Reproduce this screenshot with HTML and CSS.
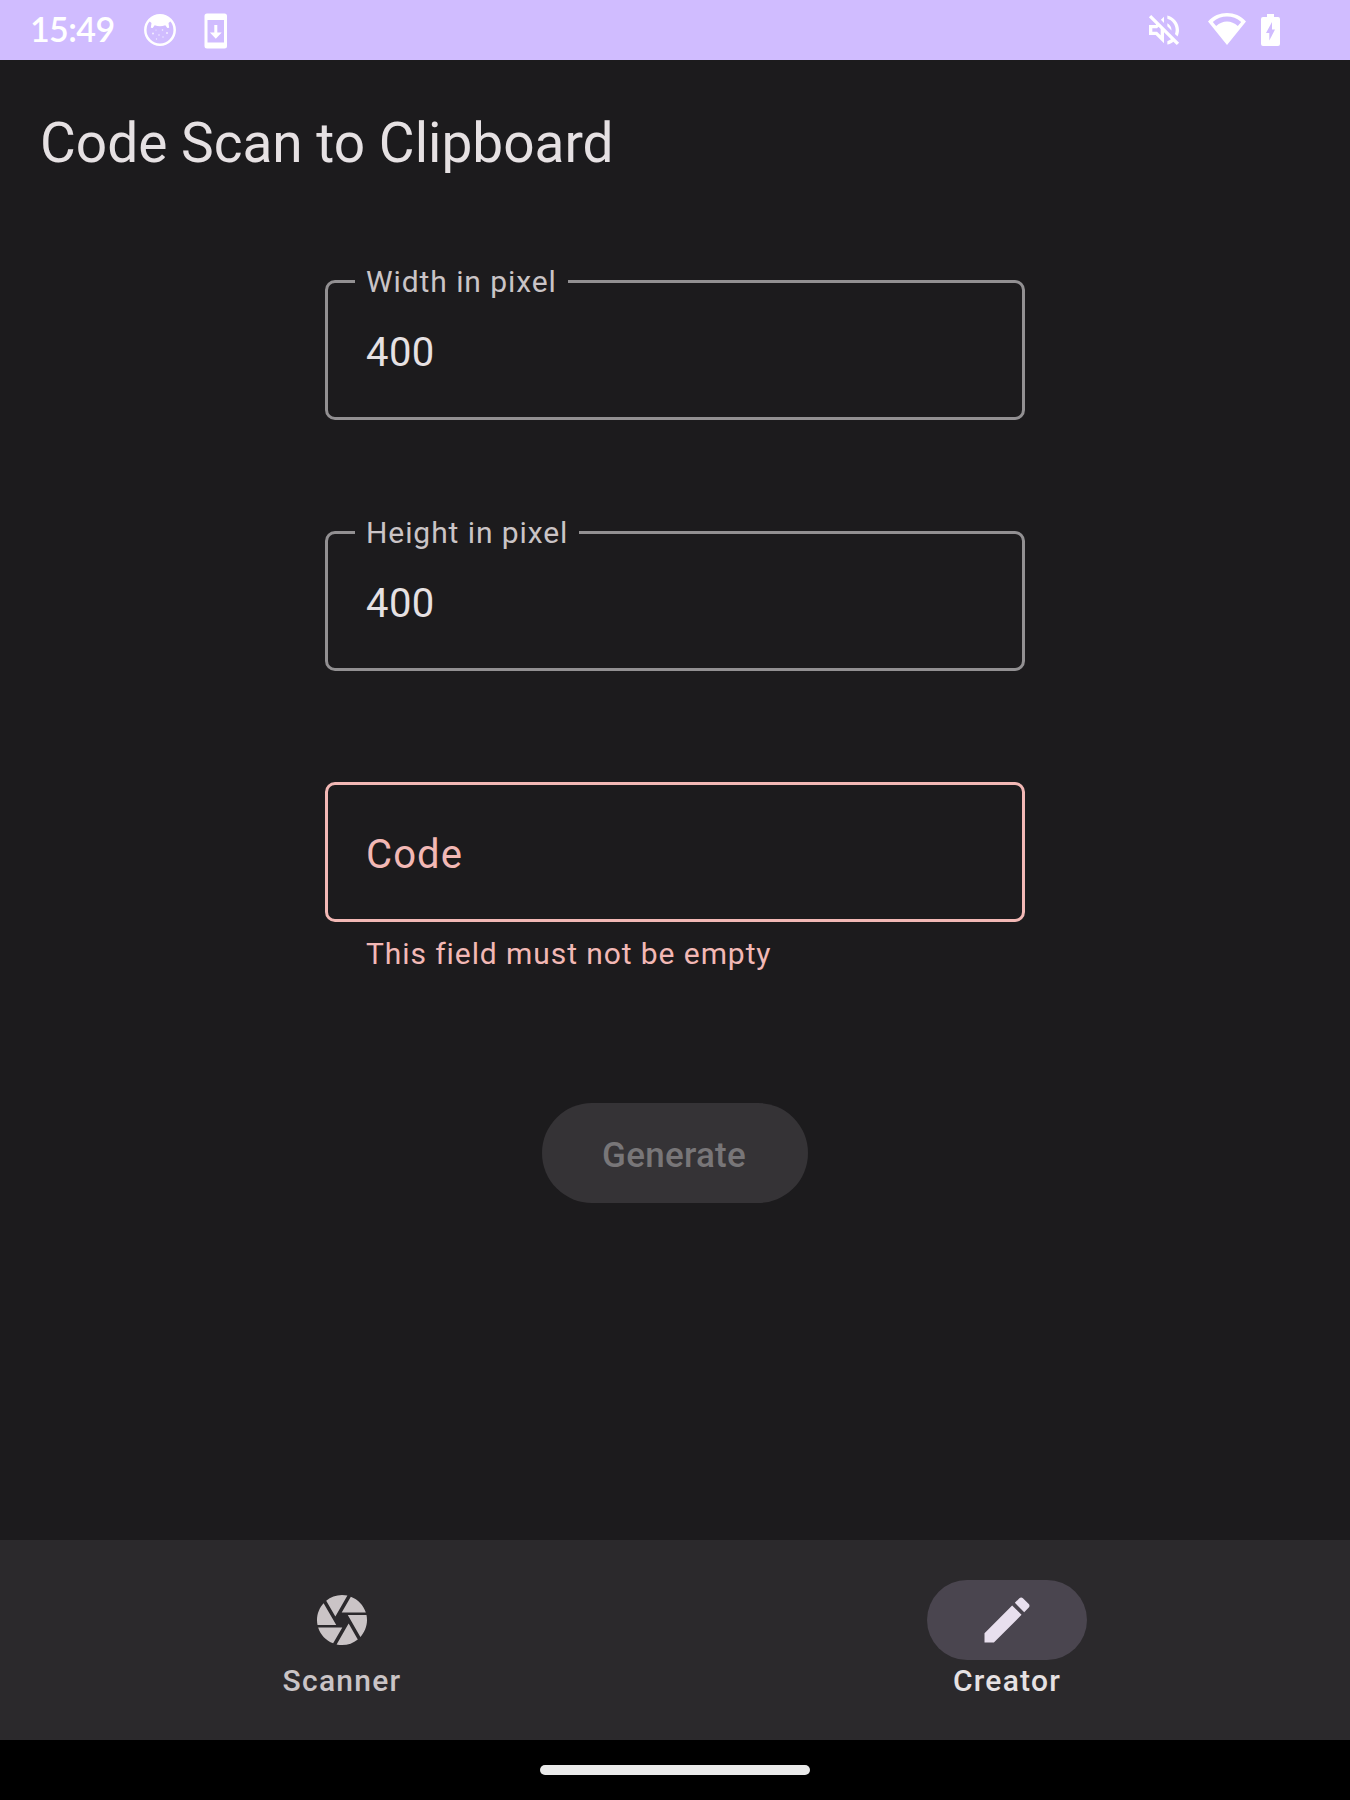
FILE: index.html
```html
<!DOCTYPE html>
<html lang="en">
<head>
<meta charset="utf-8">
<title>Code Scan to Clipboard</title>
<link rel="stylesheet" href="styles.css">
</head>
<body>
<div class="status-bar">
  <div class="status-left">
    <span class="clock">15:49</span>
    <svg class="icon-cat" viewBox="0 0 34 34">
      <circle cx="17" cy="17" r="14.7" fill="none" stroke="#fff" stroke-width="2.500"/>
      <path d="M5 7Q17-2 29 7L25.500 10 26.200 14.800 24.300 15 22.300 12.300Q17 14 11.700 12.300L9.700 15 7.800 14.800 8.500 10Z" fill="#fff"/>
      <g fill="#fff" opacity=".75"><circle cx="10" cy="20.500" r="1"/><circle cx="13" cy="17" r=".6"/><circle cx="19.500" cy="17" r=".8"/><circle cx="24" cy="20" r="1"/><circle cx="16" cy="22" r=".8"/><circle cx="20" cy="24" r=".7"/><circle cx="13.500" cy="26" r=".7"/></g>
    </svg>
    <svg class="icon-phone" viewBox="0 0 24 36">
      <path fill="#fff" fill-rule="evenodd" d="M3 .5h17.500a2.500 2.500 0 0 1 2.500 2.500v30a2.500 2.500 0 0 1-2.500 2.500H3A2.500 2.500 0 0 1 .5 33V3A2.500 2.500 0 0 1 3 .5ZM3.500 7v22.500h16.500V7Z"/>
      <path fill="#fff" d="M10.300 12h3v7.500h4.400l-5.900 6.300-5.900-6.300h4.400Z"/>
    </svg>
  </div>
  <div class="status-right">
    <svg class="icon-mute" viewBox="0 0 24 24"><path fill="#fff" d="M4.340 2.930L2.930 4.340 7.290 8.700 7 9H3v6h4l5 5v-6.590l4.180 4.180c-.65.49-1.380.88-2.180 1.110v2.060c1.340-.3 2.570-.92 3.610-1.750l2.050 2.050 1.410-1.410L4.340 2.930zM10 15.170L7.830 13H5v-2h2.830l.88-.88L10 11.410v3.760zM19 12c0 .82-.15 1.610-.41 2.340l1.530 1.530c.56-1.170.88-2.480.88-3.870 0-4.280-2.990-7.860-7-8.770v2.060c2.890.86 5 3.540 5 6.710zm-7-8l-1.880 1.880L12 7.760zm4.500 8c0-1.770-1.020-3.290-2.500-4.030v1.790l2.480 2.480c.01-.08.02-.16.02-.24z"/></svg>
    <svg class="icon-wifi" viewBox="0 0 38 32"><path fill="#fff" fill-rule="evenodd" d="M0 8.500C10-2.800 28-2.800 38 8.500L19 32ZM4.800 9L8.200 13C14.500 7 23.500 7 29.800 13L33.200 9C25 1.700 13 1.700 4.800 9Z"/></svg>
    <svg class="icon-battery" viewBox="0 0 19 32"><path fill="#fff" fill-rule="evenodd" d="M6 0h7v3h4a2 2 0 0 1 2 2v25a2 2 0 0 1-2 2H2a2 2 0 0 1-2-2V5a2 2 0 0 1 2-2h4ZM11 8L5 19h3.300v7.500L14 15.500h-3Z"/></svg>
  </div>
</div>

<header class="app-bar"><h1>Code Scan to Clipboard</h1></header>

<main class="content">
  <fieldset class="field">
    <legend>Width in pixel</legend>
    <span class="value">400</span>
  </fieldset>
  <fieldset class="field">
    <legend>Height in pixel</legend>
    <span class="value">400</span>
  </fieldset>
  <div class="field-group">
    <div class="field field-error"><span class="placeholder">Code</span></div>
    <p class="helper">This field must not be empty</p>
  </div>
  <button class="generate" disabled>Generate</button>
</main>

<nav class="bottom-nav">
  <a class="nav-item">
    <span class="indicator"><svg viewBox="0 0 24 24"><path fill="currentColor" d="M9.400 10.500l4.770-8.260C13.470 2.090 12.750 2 12 2c-2.400 0-4.600.85-6.320 2.250l3.660 6.350.06-.1zM21.540 9c-.92-2.920-3.150-5.260-6-6.340L11.880 9h9.660zm.26 1h-7.490l.29.5 4.760 8.250C20.970 16.970 22 14.610 22 12c0-.69-.07-1.350-.2-2zM8.540 12l-3.900-6.750C3.010 7.030 2 9.390 2 12c0 .69.07 1.350.2 2h7.490l-1.150-2zm-6.080 3c.92 2.920 3.150 5.260 6 6.340L12.120 15H2.460zm11.270 0l-3.900 6.760c.7.15 1.420.24 2.170.24 2.400 0 4.600-.85 6.320-2.250l-3.660-6.350-.93 1.600z"/></svg></span>
    <span class="nav-label">Scanner</span>
  </a>
  <a class="nav-item active">
    <span class="indicator"><svg viewBox="0 0 24 24"><path fill="currentColor" d="M3 17.250V21h3.750L17.810 9.940l-3.750-3.750L3 17.250zM20.710 7.040c.39-.39.39-1.020 0-1.410l-2.340-2.340c-.39-.39-1.020-.39-1.410 0l-1.830 1.830 3.750 3.750 1.830-1.830z"/></svg></span>
    <span class="nav-label">Creator</span>
  </a>
</nav>
<div class="gesture-bar"><span class="handle"></span></div>
</body>
</html>
```
FILE: styles.css
```css
* { box-sizing: border-box; }
body {
  margin: 0;
  width: 1350px;
  height: 1800px;
  display: flex;
  flex-direction: column;
  background: #1c1b1d;
  color: #e6e1e3;
  font-family: Roboto, "Liberation Sans", sans-serif;
}
svg { display: block; }

.status-bar {
  height: 60px;
  flex: none;
  display: flex;
  justify-content: space-between;
  padding: 0 70px 0 30px;
  background: #d0bcff;
  color: #fff;
}
.status-left, .status-right { display: flex; align-items: center; }
.clock {
  width: 113px;
  font: 600 34px/58px Lato, sans-serif;
  height: 60px;
  letter-spacing: -0.6px;
}
.icon-cat { width: 34px; height: 34px; }
.icon-phone { width: 24px; height: 36px; margin: 1px 0 0 26.5px; }
.icon-mute { width: 40px; height: 40px; margin-right: 1px; }
.icon-wifi { width: 38px; height: 32px; margin: -2px 0 0 23.500px; }
.icon-battery { width: 19px; height: 32px; margin: -1px 0 0 15px; }

.app-bar { height: 160px; flex: none; padding: 0 40px; }
h1 {
  margin: 0;
  font-size: 55px;
  font-weight: 400;
  line-height: 166px;
}

.content {
  flex: 1;
  display: flex;
  flex-direction: column;
  align-items: center;
  padding-top: 60px;
}
.field {
  width: 700px;
  height: 140px;
  margin: 0 0 111px;
  padding: 0 38px;
  border: 3px solid #929092;
  border-radius: 10px;
}
fieldset.field { padding-left: 27px; }
legend {
  padding: 0 11px;
  height: 3px;
  line-height: 3px;
  font-size: 30px;
  letter-spacing: 0.920px;
  color: #cac4c6;
}
.value {
  display: block;
  padding-left: 11px;
  font-size: 40px;
  line-height: 139px;
  letter-spacing: 0.4px;
}
.field-error { margin: 0; border-color: #f2b8b5; color: #f2b8b5; }
.placeholder { display: block; font-size: 40px; line-height: 139px; letter-spacing: 1.1px; }
.field-group { height: 321px; }
.helper {
  margin: 14px 0 0 41px;
  font-size: 30px;
  line-height: 36px;
  letter-spacing: 0.920px;
  color: #f2b8b5;
}
.generate {
  width: 266px;
  height: 100px;
  padding: 6px 2px 0 0;
  border: 0;
  border-radius: 50px;
  background: #353336;
  color: #787678;
  font: 500 35px/40px Roboto, sans-serif;
  letter-spacing: 0.25px;
}

.bottom-nav {
  height: 200px;
  flex: none;
  display: flex;
  padding: 40px 11px 0 9px;
  background: #2b292c;
}
.nav-item {
  flex: 1;
  display: flex;
  flex-direction: column;
  align-items: center;
  color: #cac4c6;
}
.indicator {
  width: 160px;
  height: 80px;
  display: flex;
  align-items: center;
  justify-content: center;
  border-radius: 40px;
}
.indicator svg { width: 60px; height: 60px; }
.nav-label {
  padding-left: 1px;
  font-size: 30px;
  font-weight: 500;
  line-height: 42px;
  letter-spacing: 1.25px;
}
.active { color: #e6e1e3; }
.active .indicator { background: #4a454f; color: #e8dfee; }

.gesture-bar {
  height: 60px;
  flex: none;
  display: flex;
  align-items: center;
  justify-content: center;
  background: #000;
}
.handle { width: 270px; height: 10px; border-radius: 5px; background: #ebebeb; }
```
